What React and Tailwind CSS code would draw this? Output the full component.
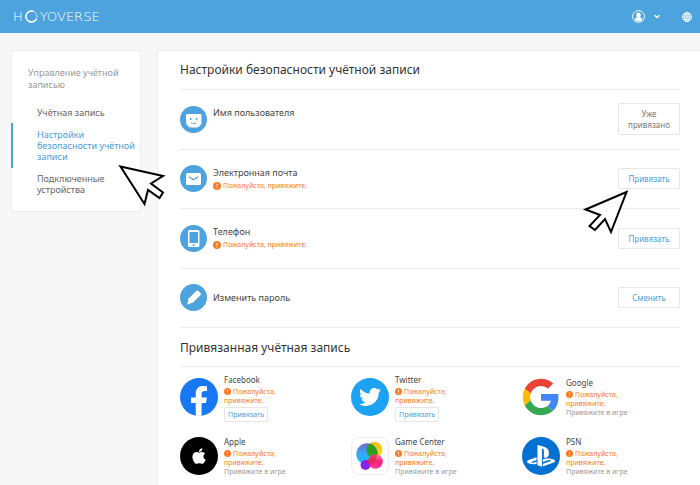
import { FaFacebookF, FaTwitter, FaApple, FaPlaystation } from "react-icons/fa";

function Logo() {
  return (
    <a href="#home" aria-label="HoYoverse" className="flex items-center gap-[2px] font-['DejaVu_Sans',sans-serif] text-[13px] leading-none font-extralight text-white">
      <span>H</span>
      <svg width="13" height="13" viewBox="0 0 12 12" fill="none" stroke="#fff">
        <circle cx="6" cy="6" r="5.1" strokeWidth="0.8" opacity="0.8" />
        <path d="M8 1.3A5.1 5.1 0 1 0 10.6 8.2" strokeWidth="1.3" />
      </svg>
      <span>YOVERSE</span>
    </a>
  );
}

function Header() {
  return (
    <header className="flex h-[33px] items-center justify-between bg-[#4da3dd] pr-2 pl-[13px]">
      <Logo />
      <div className="flex items-center">
        <button type="button" aria-label="Аккаунт" className="flex items-center gap-[9px]">
          <svg width="13" height="13" viewBox="0 0 26 26" fill="none">
            <circle cx="13" cy="13" r="11.8" stroke="#fff" strokeWidth="2" />
            <path d="M13 5c3 0 4.6 2 4.6 4.8 0 2-.8 3.8-2 4.8 3 1 5 2 5 5-2 2-4.500 3-7.600 3s-5.600-1-7.600-3c0-3 2-4 5-5-1.200-1-2-2.800-2-4.800C8.400 7 10 5 13 5Z" fill="#fff" />
          </svg>
          <svg width="6" height="5" viewBox="0 0 6 5" fill="none" stroke="#fff" strokeWidth="1.3">
            <path d="m.6 1.200 2.400 2.300 2.400-2.300" />
          </svg>
        </button>
        <button type="button" aria-label="Язык" className="ml-[22px]">
          <svg width="10" height="10" viewBox="0 0 20 20" fill="none" stroke="#fff" strokeWidth="1.800">
            <circle cx="10" cy="10" r="9" />
            <ellipse cx="10" cy="10" rx="4.500" ry="9" />
            <path d="M10 1v18M1 10h18M2.500 5.500h15M2.500 14.500h15" />
          </svg>
        </button>
      </div>
    </header>
  );
}

const menu = [
  { label: "Учётная запись" },
  { label: "Настройки безопасности учётной записи", active: true },
  { label: "Подключенные устройства" },
];

function Sidebar() {
  return (
    <aside className="w-[130px] shrink-0 rounded-xs border border-[#ececec] bg-white pt-4 pb-4">
      <h2 className="px-4 text-[9px] leading-[12px] text-[#999]">Управление учётной записью</h2>
      <nav className="mt-4 flex flex-col gap-[11px]">
        {menu.map((m) => (
          <a
            key={m.label}
            href="#menu"
            className={
              m.active
                ? "-my-[6px] -ml-px border-l-2 border-[#4da3dd] py-[6px] pl-6 text-[9px] leading-[11px] text-[#4a9ddb]"
                : "pr-4 pl-[25px] text-[9px] leading-[11px] text-[#666]"
            }
          >
            {m.label}
          </a>
        ))}
      </nav>
    </aside>
  );
}

function Alert({ className }) {
  return (
    <svg viewBox="0 0 16 16" className={className}>
      <circle cx="8" cy="8" r="8" fill="#ff7a22" />
      <path d="M8 3.500v5.500M8 10.800v2" stroke="#fff" strokeWidth="2" />
    </svg>
  );
}

function FaceIcon() {
  return (
    <svg width="27" height="27" viewBox="0 0 27 27" fill="none">
      <path d="M6 9.500C6 8.500 6.500 8 7.500 8h12.500c1 0 1.500.5 1.500 1.500V16a5.500 5.500 0 0 1-5.500 5.500h-4.500a5.500 5.500 0 0 1-5.500-5.500Z" fill="#fff" />
      <circle cx="10.700" cy="13" r="1" fill="#4da3dd" />
      <path d="m17.600 11.800-1.800 1.200 1.800 1M11.200 16.500c1.300 1.600 3.500 1.600 4.800 0" stroke="#4da3dd" strokeWidth="1" />
    </svg>
  );
}

function MailIcon() {
  return (
    <svg width="27" height="27" viewBox="0 0 27 27" fill="none">
      <rect x="6" y="8" width="15" height="12" rx="1.500" fill="#fff" />
      <path d="m8.800 11.800 4.700 3 4.700-3" stroke="#4da3dd" strokeWidth="1.200" />
    </svg>
  );
}

function PhoneIcon() {
  return (
    <svg width="27" height="27" viewBox="0 0 27 27" fill="none">
      <rect x="8" y="5" width="11.500" height="17" rx="1.500" fill="#fff" />
      <rect x="9.500" y="7" width="8.500" height="11" fill="#4da3dd" />
      <circle cx="13.700" cy="20" r="1" fill="#4da3dd" />
    </svg>
  );
}

function PencilIcon() {
  return (
    <svg width="27" height="27" viewBox="0 0 27 27" fill="none">
      <path d="M7.300 20.500 8.400 14.800 16.200 7c.7-.7 1.500-.7 2.200 0l2 2c.7.700.700 1.500 0 2.200L13 18.600Z" fill="#fff" />
    </svg>
  );
}

const rows = [
  { title: "Имя пользователя", icon: FaceIcon, action: "Уже привязано", done: true },
  { title: "Электронная почта", icon: MailIcon, action: "Привязать", warn: true },
  { title: "Телефон", icon: PhoneIcon, action: "Привязать", warn: true },
  { title: "Изменить пароль", icon: PencilIcon, action: "Сменить", center: true },
];

function Row({ title, icon: Icon, action, done, warn, center }) {
  return (
    <li className="flex flex-1 items-center border-b border-[#ececec]">
      <span className="mr-[6px] size-[27px] shrink-0 rounded-full bg-[#4da3dd]">
        <Icon />
      </span>
      <div className={center ? "flex-1" : "flex h-[26px] flex-1 flex-col"}>
        <h3 className="text-[9px] leading-[14px] text-[#444]">{title}</h3>
        {warn && (
          <p className="flex items-center gap-[2px] text-[7px] leading-[12px] text-[#ff7a22]">
            <Alert className="size-2" />
            Пожалуйста, привяжите.
          </p>
        )}
      </div>
      <button
        type="button"
        className={
          done
            ? "w-[62px] rounded-xs border border-[#e6e6e6] px-2 py-1 text-[8px] leading-[11px] text-[#777]"
            : "w-[62px] rounded-xs border border-[#e6e6e6] py-1 text-[8px] leading-[11px] text-[#4a9ddb]"
        }
      >
        {action}
      </button>
    </li>
  );
}

function FacebookLogo() {
  return (
    <span className="flex size-[38px] items-end justify-center overflow-hidden rounded-full bg-[#1877f2]">
      <FaFacebookF className="size-[30px] text-white" />
    </span>
  );
}

function TwitterLogo() {
  return (
    <span className="flex size-[38px] items-center justify-center rounded-full bg-[#1da1f2]">
      <FaTwitter className="size-[22px] text-white" />
    </span>
  );
}

function GoogleLogo() {
  return (
    <svg width="38" height="38" viewBox="-1 -1 50 50">
      <path fill="#ea4335" d="M24 9.500c3.540 0 6.710 1.220 9.210 3.600l6.850-6.850C35.900 2.380 30.470 0 24 0 14.620 0 6.510 5.380 2.560 13.220l7.980 6.190C12.430 13.720 17.740 9.500 24 9.500z" />
      <path fill="#4285f4" d="M46.980 24.550c0-1.570-.15-3.090-.38-4.550H24v9.020h12.940c-.58 2.960-2.260 5.480-4.780 7.180l7.730 6c4.510-4.180 7.090-10.360 7.090-17.650z" />
      <path fill="#fbbc05" d="M10.530 28.590c-.48-1.450-.76-2.990-.76-4.590s.27-3.140.76-4.590l-7.980-6.190C.92 16.460 0 20.120 0 24c0 3.880.92 7.540 2.560 10.780l7.970-6.190z" />
      <path fill="#34a853" d="M24 48c6.480 0 11.930-2.130 15.890-5.810l-7.730-6c-2.150 1.450-4.920 2.300-8.160 2.300-6.260 0-11.570-4.220-13.470-9.910l-7.980 6.190C6.510 42.620 14.620 48 24 48z" />
    </svg>
  );
}

function AppleLogo() {
  return (
    <span className="flex size-[38px] items-center justify-center rounded-full bg-black">
      <FaApple className="size-[18px] text-white" />
    </span>
  );
}

function GameCenterLogo() {
  return (
    <svg width="38" height="38" viewBox="0 0 38 38">
      <defs>
        <linearGradient id="blue" x1="0" y1="0" x2="0" y2="1">
          <stop offset="0" stopColor="#7468c8" />
          <stop offset=".45" stopColor="#35a5f5" />
          <stop offset="1" stopColor="#12c4ff" />
        </linearGradient>
        <linearGradient id="yellow" x1="0" y1="0" x2="0" y2="1">
          <stop offset="0" stopColor="#f3b51b" />
          <stop offset="1" stopColor="#f9ea12" />
        </linearGradient>
        <linearGradient id="pink" x1="0" y1="0" x2="0" y2="1">
          <stop offset="0" stopColor="#ff8fae" />
          <stop offset=".5" stopColor="#ff1e78" />
          <stop offset="1" stopColor="#ff3d9a" />
        </linearGradient>
        <clipPath id="blueClip">
          <circle cx="16" cy="17" r="10.700" />
        </clipPath>
      </defs>
      <rect x=".5" y=".5" width="37" height="37" rx="8" fill="#fff" stroke="#ececec" />
      <circle cx="23.500" cy="13" r="8" fill="url(#yellow)" />
      <circle cx="16" cy="17" r="10.700" fill="url(#blue)" />
      <circle cx="23.500" cy="13" r="8" fill="#2d9c22" clipPath="url(#blueClip)" />
      <circle cx="14.500" cy="28" r="5" fill="#8a22ee" />
      <circle cx="24.500" cy="24.500" r="7.300" fill="url(#pink)" />
      <path d="M17.300 23.500a7.300 7.300 0 0 1 8.700-6.200 10.700 10.700 0 0 1-7.500 9.800 7.300 7.300 0 0 1-1.200-3.600Z" fill="#d3303f" opacity=".75" />
      <path d="M17.300 24.200a5 5 0 0 1 1.800 5 7.300 7.300 0 0 1-1.800-5Z" fill="#b1159f" />
    </svg>
  );
}

function PsnLogo() {
  return (
    <span className="flex size-[38px] items-center justify-center rounded-full bg-[#0070d1]">
      <FaPlaystation className="size-[28px] text-white" />
    </span>
  );
}

const accounts = [
  { name: "Facebook", logo: FacebookLogo, web: true },
  { name: "Twitter", logo: TwitterLogo, web: true },
  { name: "Google", logo: GoogleLogo },
  { name: "Apple", logo: AppleLogo },
  { name: "Game Center", logo: GameCenterLogo },
  { name: "PSN", logo: PsnLogo },
];

function Account({ name, logo: Logo, web }) {
  return (
    <li className="flex h-[50px] items-center gap-[6px]">
      <span className="shrink-0">
        <Logo />
      </span>
      <div className="w-[66px]">
        <h3 className="text-[8px] leading-[14px] text-[#444]">{name}</h3>
        <p className="text-[7px] leading-[9px] text-[#ff7a22]">
          <Alert className="mr-[2px] inline-block size-[7px] align-[-1px]" />
          Пожалуйста, привяжите.
        </p>
        {web ? (
          <button type="button" className="mt-[2px] block rounded-xs border border-[#e6e6e6] px-[3px] py-px text-[7px] leading-[11px] text-[#4a9ddb]">
            Привязать
          </button>
        ) : (
          <p className="text-[7px] leading-[10px] whitespace-nowrap text-[#999]">Привяжите в игре</p>
        )}
      </div>
    </li>
  );
}

function Pointer({ className, points }) {
  return (
    <svg width="48" height="46" viewBox="0 0 48 46" className={className} aria-hidden="true">
      <polygon points={points} fill="#fff" stroke="#000" strokeWidth="2" />
    </svg>
  );
}

export default function App() {
  return (
    <div className="relative h-screen overflow-hidden bg-[#f7f7f7] font-['Noto_Sans',sans-serif]">
      <Header />
      <div className="flex items-start gap-4 pt-[17px] pl-[11px]">
        <Sidebar />
        <main className="min-h-screen flex-1 border-t border-l border-[#ececec] bg-white pr-5 pl-[22px]">
          <h1 className="border-b border-[#ececec] pt-[11px] pb-[11px] text-[12px] leading-4 text-[#333]">Настройки безопасности учётной записи</h1>
          <ul className="flex h-[238px] flex-col">
            {rows.map((r) => (
              <Row key={r.title} {...r} />
            ))}
          </ul>
          <h2 className="border-b border-[#ececec] pt-3 pb-[10px] text-[12px] leading-4 text-[#333]">Привязанная учётная запись</h2>
          <ul className="grid grid-cols-[171px_171px_1fr] gap-y-[9px] pt-[5px]">
            {accounts.map((a) => (
              <Account key={a.name} {...a} />
            ))}
          </ul>
        </main>
      </div>
      <Pointer className="absolute top-[163px] left-[118px]" points="2.500,3.500 45,13 33,20.500 45,29.500 41.500,35 30,27 26.500,41" />
      <Pointer className="absolute top-[189px] left-[582px]" points="44.500,3 3.500,20.500 18,26 7.500,37 13,41 23,30 29,43" />
    </div>
  );
}
